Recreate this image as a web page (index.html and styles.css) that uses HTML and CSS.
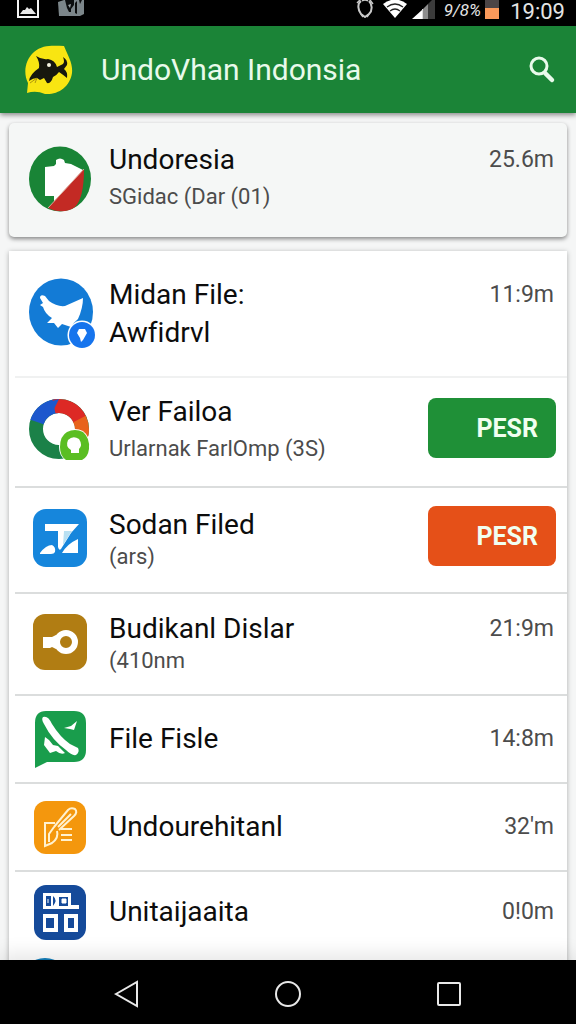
FILE: index.html
```html
<!DOCTYPE html>
<html lang="id">
<head>
<meta charset="utf-8">
<meta name="viewport" content="width=device-width, initial-scale=1">
<title>UndoVhan Indonsia</title>
<link rel="stylesheet" href="styles.css">
</head>
<body>
<div class="status">
  <svg width="22" height="18" viewBox="0 0 22 18"><path d="M1 0V17H21V0" fill="none" stroke="#f4f4f4" stroke-width="2"/><path d="M3 14L6 10L8 10L10 7L12 9L14 8L19 14Z" fill="#e8e8e8"/></svg>
  <svg class="status-second" width="26" height="16" viewBox="0 0 26 16"><path d="M0 2L6 0H26V14L22 16H1Z" fill="#7c868a"/><path d="M7 0L9 8L11 12H13V9L16 5V0ZM17 3L19 1V14L17 13ZM21 0H24L22 4Z" fill="#0b0d0e"/><path d="M10 5L13 4L12 8Z" fill="#9aa3a6"/></svg>
  <span class="status-space"></span>
  <svg width="18" height="18" viewBox="0 0 18 18" fill="none" stroke="#c9c9c9"><path d="M5 1C1 4 2 10 5 14L9 17L13 14C17 10 16 4 13 1" stroke-width="2"/><path d="M1 3L4 0M14 0L17 4M6 1Q9 -1 12 1M5 14L7 17M13 14L11 17" stroke-width="1.5"/></svg>
  <svg class="wifi" width="24" height="18" viewBox="0 0 24 18"><path d="M0 4Q12 -5 24 4L12 18Z" fill="#fff"/><path d="M4 7Q12 1 20 7M7 11Q12 7 17 11" fill="none" stroke="#222" stroke-width="1.3"/></svg>
  <svg width="24" height="19" viewBox="0 0 24 19"><path d="M0 19L10 10V19Z" fill="#fff"/><path d="M10 10L16 4V19H10Z" fill="#8d8d8d"/><path d="M16 4L20 0H23V19H16Z" fill="#3b3b3b"/><path d="M10.500 9V19" stroke="#ddd"/></svg>
  <span class="percent">9/8%</span>
  <svg width="14" height="19" viewBox="0 0 14 19"><path d="M0 0H14V8H0Z" fill="#4c4546"/><path d="M0 8H14V19H0Z" fill="#fb9a5b"/></svg>
  <span class="clock">19:09</span>
</div>

<header class="appbar">
  <svg width="48" height="50" viewBox="0 0 48 50"><path d="M2 48L3 38C-2 28 0 15 9 7C18 -1 30 1 39 1C43 11 48 18 47 28C45 42 33 50 20 49Q11 45 2 48Z" fill="#f8e512"/><path d="M11 11Q17 15 23 14Q30 15 32 22L38 19Q40 17 38 12Q43 15 42 20L39 24Q43 27 42 33Q37 29 34 27Q31 31 28 32Q26 39 22 38L19 33L15 35L12 33Q8 33 4 36Q5 29 14 23Q15 17 11 11Z" fill="#17180e"/><circle cx="24" cy="20" r="2" fill="#f5f5df"/><path d="M5 38L12 33L10 38" fill="none" stroke="#ae960d" stroke-width="1"/></svg>
  <h1 class="title">UndoVhan Indonsia</h1>
  <button class="search" aria-label="Search"><svg width="28" height="28" viewBox="0 0 28 28" fill="none" stroke="#e9faeb"><circle cx="11" cy="10" r="8" stroke-width="3"/><path d="M17 17L24 24" stroke-width="4.500" stroke-linecap="round"/></svg></button>
</header>

<main class="content">
  <section class="card featured">
    <article class="row">
      <div class="icon"><svg width="62" height="66" viewBox="0 0 62 66"><ellipse cx="31" cy="33" rx="31" ry="32.500" fill="#198436"/><path d="M16 21L25 20L27 18V14Q31 11 35 14L36 17L42 18L54 24L53 30L25 56V50H16Z" fill="#fff"/><path d="M55 23Q55 52 46 61C38 67 27 66 19 62Z" fill="#c32a24"/><path d="M55 23L19 62" stroke="#dba395"/></svg></div>
      <div class="copy"><div class="line"><h2 class="name">Undoresia</h2><span class="time">25.6m</span></div><p class="sub">SGidac (Dar (01)</p></div>
    </article>
  </section>

  <section class="card list">
    <article class="row row-tall">
      <div class="icon"><svg width="66" height="72" viewBox="0 0 66 72"><ellipse cx="32" cy="34" rx="32" ry="33.500" fill="#137bd6"/><path d="M11 20Q11 16 16 18L20 23Q28 29 36 28L54 20Q54 30 49 41Q44 45 42 49L33 46L29 50L25 45L18 45L23 40Q16 36 14 29L11 27L14 25Z" fill="#fff"/><circle cx="53" cy="57" r="14.500" fill="#fff"/><circle cx="53" cy="57" r="13" fill="#1674ed"/><path d="M50 51H56L58 55L54 62L52 64L51 60L48 55Z" fill="#fff"/></svg></div>
      <div class="copy"><div class="line"><h2 class="name">Midan File:<br>Awfidrvl</h2><span class="time">11:9m</span></div></div>
    </article>

    <article class="row row-large">
      <div class="icon"><svg width="62" height="64" viewBox="0 0 62 64"><g fill="none" stroke-width="14"><circle cx="30" cy="31" r="23" stroke="#1b8148"/><path d="M8 24A23 23 0 0 1 30 8" stroke="#1d58cd"/><path d="M25 8.500A23 23 0 0 1 51 22" stroke="#dd2925"/><path d="M50.500 21A23 23 0 0 1 52 38" stroke="#e8631c"/></g><path d="M30 1L22 17L14 14L20 4Z" fill="#1d58cd"/><path d="M38 33Q46 29 54 33Q62 39 61 51Q60 59 54 63H37Q30 58 30 49Q30 37 38 33Z" fill="#fff"/><path d="M38 34Q46 30 54 34Q61 40 60 51Q59 59 53 62H37Q31 58 31 49Q31 38 38 34Z" fill="#5abe22"/><path d="M39 42Q44 37 50 41Q54 47 50 51V55H42V52Q36 49 39 42Z" fill="#fff"/></svg></div>
      <div class="copy"><h2 class="name">Ver Failoa</h2><p class="sub">Urlarnak FarlOmp (3S)</p></div>
      <button class="action green">PESR</button>
    </article>

    <article class="row compact row-medium">
      <div class="icon"><svg width="54" height="58" viewBox="0 0 54 58"><rect width="54" height="58" rx="13" fill="#1686dc"/><path d="M12 15H46L38 24L28 40Q26 42 25 38V22H12Z" fill="#fff"/><path d="M31 22H39L30 36Z" fill="#b9e0f2"/><path d="M7 44Q13 36 19 36Q23 38 22 43Q21 45 18 45H7ZM29 44Q34 35 45 30V44Z" fill="#fff"/></svg></div>
      <div class="copy"><h2 class="name">Sodan Filed</h2><p class="sub">(ars)</p></div>
      <button class="action orange">PESR</button>
    </article>

    <article class="row compact row-small">
      <div class="icon"><svg width="54" height="56" viewBox="0 0 54 56"><rect width="54" height="56" rx="12" fill="#b17d13"/><path d="M10 23H19L23 21V35L19 33L17 34H10Z" fill="#fff"/><circle cx="33" cy="28" r="9" fill="none" stroke="#fff" stroke-width="6"/></svg></div>
      <div class="copy"><div class="line"><h2 class="name">Budikanl Dislar</h2><span class="time">21:9m</span></div><p class="sub">(410nm</p></div>
    </article>

    <article class="row">
      <div class="icon"><svg width="52" height="57" viewBox="0 0 52 57"><path d="M12 0H40Q52 0 52 12V39Q52 51 40 51H13L1 57V12Q1 0 12 0Z" fill="#199d4c"/><path d="M9 6Q14 4 18 13Q26 26 36 33L44 37Q46 41 42 44Q38 45 32 39Q18 29 10 13Q7 8 9 6ZM11 26L15 29L19 34L24 35L31 42Q27 44 22 40L16 42L10 34ZM30 17L37 15L43 10L40 19L36 18Z" fill="#fff"/></svg></div>
      <div class="copy"><div class="line"><h2 class="name">File Fisle</h2><span class="time">14:8m</span></div></div>
    </article>

    <article class="row">
      <div class="icon"><svg width="52" height="53" viewBox="0 0 52 53" fill="none" stroke="#fff1cf" stroke-width="2"><rect width="52" height="53" rx="12" fill="#f4970d" stroke="none"/><path d="M20 26L34 9Q37 6 41 8Q44 11 40 15L25 29M24 26L37 13M21 22H11V45L18 42Q25 37 23 30M20 26L15 33V41M27 28H38M27 34H38M27 39H38"/></svg></div>
      <div class="copy"><div class="line"><h2 class="name">Undourehitanl</h2><span class="time">32'm</span></div></div>
    </article>

    <article class="row last">
      <div class="icon"><svg width="52" height="55" viewBox="0 0 52 55"><rect width="52" height="55" rx="12" fill="#154a9a"/><path d="M9 8H37V20H45V24H9ZM9 29H24V47H9ZM30 29H44V47H30Z" fill="#fff"/><path d="M12 11H17V21H12ZM19 11Q24 15 19 21ZM25 12H34V21H25ZM12 33H20V43H12ZM34 33H40V43H34Z" fill="#154a9a"/><path d="M28 14H32V18H28ZM14 14V18" fill="#fff" stroke="#fff"/></svg></div>
      <div class="copy"><div class="line"><h2 class="name">Unitaijaaita</h2><span class="time">0!0m</span></div></div>
    </article>

    <article class="row next">
      <div class="icon"><svg width="62" height="62" viewBox="0 0 62 62"><circle cx="16" cy="24" r="24" fill="#147fbc"/></svg></div>
    </article>
  </section>
</main>

<nav class="navbar" aria-label="System">
  <button class="key" aria-label="Back"><svg width="28" height="28" viewBox="0 0 28 28"><path d="M3 14L24 2V26Z"/></svg></button>
  <button class="key" aria-label="Home"><svg width="28" height="28" viewBox="0 0 28 28"><circle cx="14" cy="14" r="12"/></svg></button>
  <button class="key" aria-label="Recent"><svg width="28" height="28" viewBox="0 0 28 28"><rect x="3" y="3" width="22" height="22" rx="1"/></svg></button>
</nav>
</body>
</html>
```

FILE: styles.css
```css
* {
  box-sizing: border-box;
}

body {
  margin: 0;
  height: 100vh;
  display: flex;
  flex-direction: column;
  background: #f5f6f6;
  color: #0c0c0c;
  font-family: Roboto, "Noto Sans", sans-serif;
  font-variant-ligatures: none;
}

h1,
h2,
p {
  margin: 0;
  font-weight: 400;
}

svg {
  display: block;
  flex: none;
}

button {
  border: 0;
  padding: 0;
  background: none;
  font-family: inherit;
  cursor: pointer;
}

.status {
  flex: none;
  height: 26px;
  display: flex;
  align-items: flex-start;
  padding: 0 11px 0 17px;
  background: #000;
  color: #e4e4e4;
}

.status-second {
  margin-left: 19px;
}

.status-space {
  flex: 1;
}

.wifi {
  margin: 0 5px 0 9px;
}

.percent {
  margin: 0 4px 0 8px;
  font-size: 17px;
  line-height: 20px;
  font-style: italic;
}

.clock {
  margin-left: 11px;
  font-size: 22px;
  line-height: 24px;
}

.appbar {
  position: relative;
  z-index: 1;
  flex: none;
  height: 87px;
  display: flex;
  align-items: center;
  padding: 0 20px 0 25px;
  background: #1b8437;
  box-shadow: 0 2px 5px rgba(0, 0, 0, 0.45);
}

.title {
  flex: 1;
  margin-left: 28px;
  color: #e9faeb;
  font-size: 30px;
  line-height: 40px;
}

.content {
  flex: 1;
  min-height: 0;
  overflow: hidden;
  padding: 10px 9px 0;
}

.card {
  background: #fff;
  box-shadow: 0 1px 5px rgba(0, 0, 0, 0.3);
}

.featured {
  margin-bottom: 14px;
  border-radius: 5px;
  background: #f5f7f6;
  box-shadow: 0 2px 4px rgba(0, 0, 0, 0.45);
}

.row {
  display: flex;
  align-items: center;
  min-height: 88px;
  padding: 0 11px 2px 20px;
}

.featured .row {
  min-height: 114px;
}

.featured .copy {
  padding-bottom: 2px;
}

.list .row {
  background: linear-gradient(#dbdddd, #dbdddd) 6px 100% / 100% 2px no-repeat;
}

.list .row-tall {
  min-height: 127px;
  background-image: linear-gradient(#f0f1f1, #f0f1f1);
}

.row-large {
  min-height: 110px;
}

.row-medium {
  min-height: 106px;
}

.row-small {
  min-height: 102px;
}

.row-large,
.row-medium,
.row-small {
  padding-bottom: 6px;
}

.list .last,
.list .next {
  background: none;
}

.last {
  min-height: 82px;
}

.list .next {
  padding-top: 4px;
  align-items: flex-start;
}

.icon {
  flex: none;
  width: 62px;
  margin-right: 18px;
  display: flex;
  justify-content: center;
}

.row-tall .icon {
  justify-content: flex-start;
}

.copy {
  flex: 1;
  min-width: 0;
}

.line {
  display: flex;
  justify-content: space-between;
}

.name {
  font-size: 28px;
  line-height: 38px;
}

.time,
.sub {
  color: #4c4c4c;
}

.time {
  padding-right: 2px;
  font-size: 23px;
  line-height: 38px;
}

.sub {
  font-size: 22px;
  line-height: 36px;
}

.compact .sub {
  line-height: 26px;
}

.action {
  flex: none;
  width: 128px;
  height: 60px;
  margin-bottom: 4px;
  padding-right: 18px;
  border-radius: 8px;
  color: #f1fff0;
  font-size: 25px;
  font-weight: 700;
  text-align: right;
}

.green {
  background: #1f9037;
}

.orange {
  background: #e55018;
}

.navbar {
  position: relative;
  flex: none;
  height: 64px;
  display: flex;
  align-items: center;
  padding: 4px 46px 0;
  background: #000;
  box-shadow: 0 -6px 18px rgba(0, 0, 0, 0.1);
}

.key {
  flex: 1;
  display: flex;
  justify-content: center;
}

.key svg {
  fill: none;
  stroke: #e8e8e8;
  stroke-width: 2;
}
```
